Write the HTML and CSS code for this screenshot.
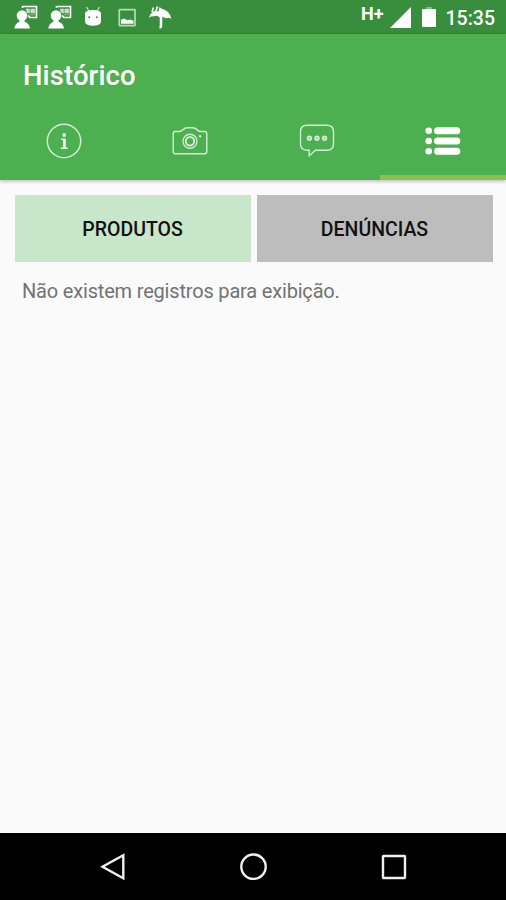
FILE: index.html
```
<!DOCTYPE html>
<html lang="pt-BR">
  <head>
    <meta charset="UTF-8" />
    <meta name="viewport" content="width=device-width, initial-scale=1.0" />
    <title>Histórico</title>
    <link rel="stylesheet" href="styles.css">
  </head>
  <body>
    <div class="status-bar">
      <div class="notifications">
        <svg width="24" height="24" viewBox="0 0 24 24">
          <path d="M8.500 3V1.500H22.500V12.500H16l-2-2" fill="none" stroke="#fff" stroke-width="1.600" />
          <path d="M12 4h3.500v4h-2zM16.800 4h4v4h-4zM15 9.800h6" fill="#c5e0c6" stroke="#c5e0c6" stroke-width=".6" />
          <circle cx="8" cy="10.500" r="5.300" fill="#fff" />
          <path d="M5.500 14h5v2.500Q15.500 18.500 16 23.500H0.300Q1 18.500 5.500 16.500z" fill="#fff" />
        </svg>
        <svg width="24" height="24" viewBox="0 0 24 24">
          <path d="M8.500 3V1.500H22.500V12.500H16l-2-2" fill="none" stroke="#fff" stroke-width="1.600" />
          <path d="M12 4h3.500v4h-2zM16.800 4h4v4h-4zM15 9.800h6" fill="#c5e0c6" stroke="#c5e0c6" stroke-width=".6" />
          <circle cx="8" cy="10.500" r="5.300" fill="#fff" />
          <path d="M5.500 14h5v2.500Q15.500 18.500 16 23.500H0.300Q1 18.500 5.500 16.500z" fill="#fff" />
        </svg>
        <svg width="24" height="24" viewBox="0 0 24 24">
          <path d="M5.500 2l2.500 4M18.500 2l-2.500 4" stroke="#c5e0c6" stroke-width="1.200" />
          <path d="M4 8Q5 5 12 5T20 8V17Q19 20.800 12 20.800T4 17z" fill="#fff" />
          <circle cx="8.200" cy="12.300" r="1" fill="#388e3c" />
          <circle cx="15.800" cy="12.300" r="1" fill="#388e3c" />
        </svg>
        <svg width="24" height="24" viewBox="0 0 24 24">
          <rect x="4.300" y="4.700" width="15.700" height="16" rx=".5" fill="none" stroke="#b7dab8" stroke-width="1.700" />
          <path d="M6 18.800v-4l3-1.300 3.500 1.800 2.500-.8 3.500 1.300v3z" fill="#fff" />
        </svg>
        <svg width="24" height="24" viewBox="0 0 24 24">
          <path d="M1 13Q2 8 6.500 6l4 .5 1-4.500 1.800 1.500Q22 5.500 23.300 14 20.500 11.800 18.500 13.500 15 11 12 12.500 8.500 9.500 5.500 11.500 3 10.500 1 13z" fill="#fff" />
          <path d="M13 11v9.500q0 2 -1.500 2M13 11v9" fill="none" stroke="#fff" stroke-width="2.500" />
          <path d="M5.500 2.500L4 7M9.500 1.500L8 6" stroke="#fff" stroke-width="1.700" />
        </svg>
      </div>
      <div class="system">
        <span class="network">H+</span>
        <svg class="signal" width="21" height="21" viewBox="0 0 21 21">
          <path d="M21 0v21H0z" fill="#fff" />
        </svg>
        <svg class="battery" width="14" height="21" viewBox="0 0 14 21">
          <path d="M4 0h6v3H4z" fill="#81bb84" />
          <rect y="2" width="14" height="18" rx="1" fill="#fff" />
        </svg>
        <span class="clock">15:35</span>
      </div>
    </div>

    <header class="app-bar">
      <h1>Histórico</h1>
      <nav class="tabs">
        <a class="tab">
          <svg width="36" height="36" viewBox="0 0 36 36">
            <circle cx="18" cy="18" r="16.700" fill="none" stroke="#d3ecd4" stroke-width="1.500" />
            <circle cx="18.200" cy="12" r="1.900" fill="#e8f5e9" />
            <path d="M15 16.200h3.800V25M14.800 25.200h7" fill="none" stroke="#e8f5e9" stroke-width="1.500" />
            <path d="M18.300 16v9" stroke="#e8f5e9" stroke-width="2.800" />
          </svg>
        </a>
        <a class="tab">
          <svg width="36" height="36" viewBox="0 0 36 36" fill="none" stroke="#d3ecd4" stroke-width="1.400">
            <path d="M3.500 8.500H7.500Q9.500 8.500 11 6.800 12.800 4.700 15.500 4.700h5q2.700 0 4.500 2.100Q26.500 8.500 28.500 8.500h4q2.300 0 2.300 2.300v17.700q0 2.300-2.300 2.300h-29Q1.200 30.800 1.200 28.500V10.800Q1.200 8.500 3.500 8.500z" />
            <circle cx="18" cy="18.300" r="7" />
            <circle cx="18" cy="18.300" r="4.200" stroke-width="2" />
            <circle cx="28" cy="13.200" r="1.200" fill="#d3ecd4" stroke="none" />
          </svg>
        </a>
        <a class="tab">
          <svg width="36" height="36" viewBox="0 0 36 36" fill="none" stroke="#d3ecd4" stroke-width="1.400">
            <path d="M8 2.200h20q6.500 0 6.500 6.500v12q0 6.500-6.500 6.500H16.500L10.200 32.800V27.200H8Q1.500 27.200 1.500 20.700V8.700Q1.500 2.200 8 2.200z" />
            <circle cx="10.400" cy="15.200" r="2" fill="#a6d7a8" />
            <circle cx="18" cy="15.200" r="2" fill="#a6d7a8" />
            <circle cx="25.600" cy="15.200" r="2" fill="#a6d7a8" />
          </svg>
        </a>
        <a class="tab active">
          <svg width="36" height="36" viewBox="0 0 36 36" fill="#fff">
            <circle cx="3.700" cy="7.700" r="3.300" />
            <circle cx="3.700" cy="18" r="3.300" />
            <circle cx="3.700" cy="28.300" r="3.300" />
            <rect x="9" y="4.200" width="26.300" height="7" rx="3.500" />
            <rect x="9" y="14.500" width="26.300" height="7" rx="3.500" />
            <rect x="9" y="24.800" width="26.300" height="7" rx="3.500" />
          </svg>
        </a>
      </nav>
    </header>

    <main class="content">
      <div class="buttons">
        <button class="btn selected">PRODUTOS</button>
        <button class="btn">DENÚNCIAS</button>
      </div>
      <p class="message">Não existem registros para exibição.</p>
    </main>

    <footer class="nav-bar">
      <svg width="30" height="30" viewBox="0 0 30 30">
        <path d="M25.300 3.300v22.900L4.500 14.700z" />
      </svg>
      <svg width="30" height="30" viewBox="0 0 30 30">
        <circle cx="14.500" cy="14.700" r="12.200" />
      </svg>
      <svg width="30" height="30" viewBox="0 0 30 30">
        <rect x="4" y="4" width="22" height="22" rx=".5" />
      </svg>
    </footer>
  </body>
</html>
```

FILE: styles.css
```
body {
  font-family: Roboto, sans-serif;
  margin: 0;
  height: 900px;
  background-color: #fafafa;
  display: flex;
  flex-direction: column;
  overflow: hidden;
}

svg {
  display: block;
  flex-shrink: 0;
}

/* Status bar */
.status-bar {
  height: 34px;
  box-sizing: border-box;
  padding: 5px 11px 0 14px;
  background-color: #388e3c;
  color: #fff;
  display: flex;
  justify-content: space-between;
}

.notifications {
  display: flex;
  gap: 9.6px;
}

.system {
  display: flex;
  align-items: flex-start;
  font-weight: 500;
}

.network {
  font-size: 18px;
  font-weight: 700;
  line-height: 17px;
}

.signal {
  margin: 2px 0 0 6px;
}

.battery {
  margin: 2px 0 0 11px;
}

.clock {
  margin: 2px 0 0 10px;
  font-size: 19.5px;
  line-height: 23px;
}

/* App bar */
.app-bar {
  height: 146px;
  background-color: #4caf50;
  box-shadow: 0 1px 4px rgba(0, 0, 0, 0.3);
  display: flex;
  flex-direction: column;
}

h1 {
  margin: 0;
  padding: 26px 0 0 23px;
  color: #fff;
  font-size: 27.5px;
  font-weight: 500;
  line-height: 32px;
  letter-spacing: 0.1px;
}

.tabs {
  margin-top: auto;
  height: 79px;
  display: flex;
}

.tab {
  flex: 1;
  box-sizing: border-box;
  border-bottom: 5px solid transparent;
  padding: 6px 0 0 1px;
  display: flex;
  align-items: center;
  justify-content: center;
}

.tab.active {
  border-bottom-color: #8bc34a;
}

/* Content */
.content {
  flex: 1;
  padding: 14.5px 13.5px 0 14.5px;
}

.buttons {
  display: flex;
  gap: 6px;
}

.btn {
  flex: 1;
  height: 67.5px;
  padding: 2px 0 0;
  border: none;
  background-color: #bdbdbd;
  color: #111;
  font-family: inherit;
  font-size: 19.5px;
  font-weight: 500;
}

.btn.selected {
  background-color: #c8e6c9;
}

.message {
  margin: 16.5px 0 0 7.5px;
  color: #737373;
  font-size: 20px;
  line-height: 24px;
  letter-spacing: -0.18px;
}

/* Navigation bar */
.nav-bar {
  height: 67px;
  box-sizing: border-box;
  padding: 0 97px 0 98px;
  background-color: #000;
  display: flex;
  align-items: center;
  justify-content: space-between;
  fill: none;
  stroke: #f0f0f0;
  stroke-width: 2.4;
}
```
